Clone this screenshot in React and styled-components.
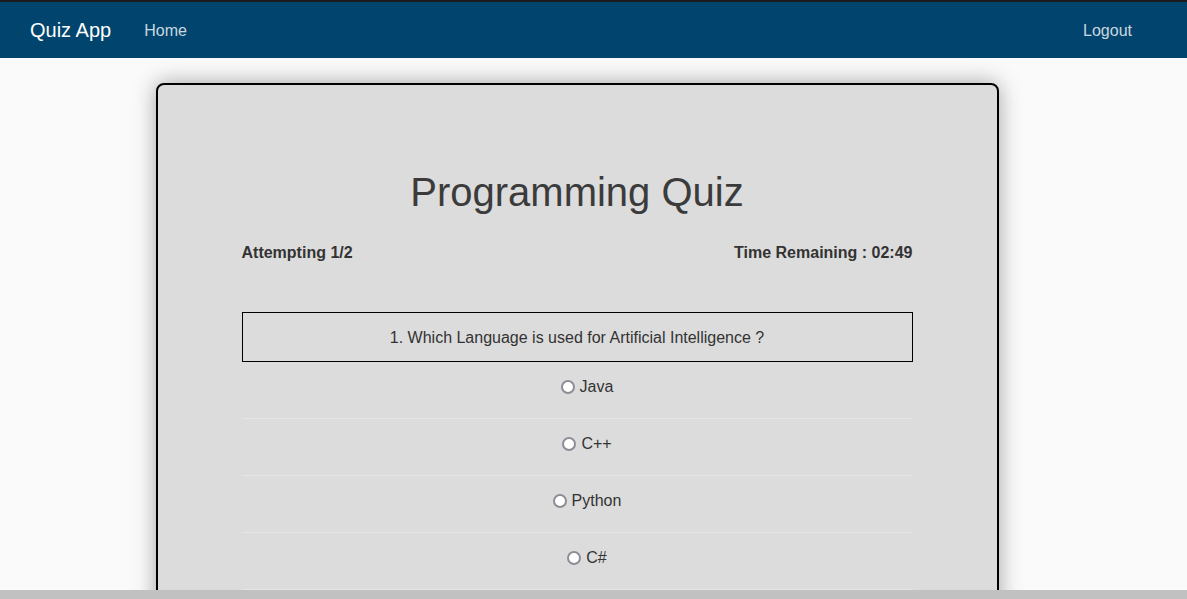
import React from 'react'
import styled, {createGlobalStyle} from 'styled-components'

const Global = createGlobalStyle`
    body{
        margin: 0;
        background: #fafafa;
        font-family: "Liberation Sans", Arial, sans-serif;
        color: #333;
    }
`
const Navbar = styled.nav`
    height: 56px;
    border-top: 2px solid #1c1c1c;
    background: #01446d;
    display: flex;
    align-items: center;
    padding: 0 55px 0 30px;
`
const Brand = styled.span`
    color: #fff;
    font-size: 20px;
    margin-right: 33px;
`
const NavLink = styled.a`
    color: rgba(255,255,255,0.8);
    font-size: 16px;
    padding-top: 2px;
    text-decoration: none;
    margin-left: ${props => props.right ? 'auto' : '0'};
`
const Page = styled.main`
    display: flex;
    justify-content: center;
    padding-top: 25px;
`
const Card = styled.div`
    width: 671px;
    min-height: 600px;
    margin-left: -33px;
    padding: 82px 84px 0 84px;
    background: #dcdcdc;
    border: 2px solid #000;
    border-radius: 8px;
    box-shadow: 0 0 22px rgba(0,0,0,0.35);
`
const Title = styled.h1`
    margin: 0;
    text-align: center;
    font-size: 40px;
    font-weight: 400;
    line-height: 50px;
    color: #3b3b3b;
`
const Status = styled.div`
    display: flex;
    justify-content: space-between;
    margin-top: 26px;
    font-size: 16px;
    font-weight: 700;
    line-height: 20px;
    color: #333;
`
const Question = styled.div`
    margin-top: 49px;
    box-sizing: border-box;
    height: 50px;
    padding-top: 2px;
    border: 1px solid #000;
    display: flex;
    align-items: center;
    justify-content: center;
    font-size: 16px;
`
const Options = styled.ul`
    list-style: none;
    margin: 0;
    padding: 0;
`
const Option = styled.li`
    padding: 13px 0 19px 20px;
    border-bottom: 1px solid #e6e6e6;
    text-align: center;
    font-size: 16px;
    label{
        display: inline-flex;
        align-items: center;
        height: 24px;
        line-height: 24px;
    }
`
const Radio = styled.input`
    appearance: none;
    box-sizing: border-box;
    width: 14px;
    height: 14px;
    margin: 0 5px 0 0;
    border: 2px solid #8d8d97;
    border-radius: 50%;
    background: #fff;
`
const Scrollbar = styled.div`
    position: fixed;
    left: 0;
    right: 0;
    bottom: 0;
    height: 9px;
    background: #c1c1c1;
`

const options = ['Java', 'C++', 'Python', 'C#']

const App = () => {
    return (
        <>
        <Global/>
        <Navbar>
            <Brand>Quiz App</Brand>
            <NavLink href="#">Home</NavLink>
            <NavLink href="#" right>Logout</NavLink>
        </Navbar>
        <Page>
            <Card>
                <Title>Programming Quiz</Title>
                <Status>
                    <span>Attempting 1/2</span>
                    <span>Time Remaining : 02:49</span>
                </Status>
                <Question>1. Which Language is used for Artificial Intelligence ?</Question>
                <Options>
                    {options.map(o => (
                        <Option key={o}>
                            <label><Radio type="radio" name="answer"/>{o}</label>
                        </Option>
                    ))}
                </Options>
            </Card>
        </Page>
        <Scrollbar/>
        </>
    )
}

export default App
